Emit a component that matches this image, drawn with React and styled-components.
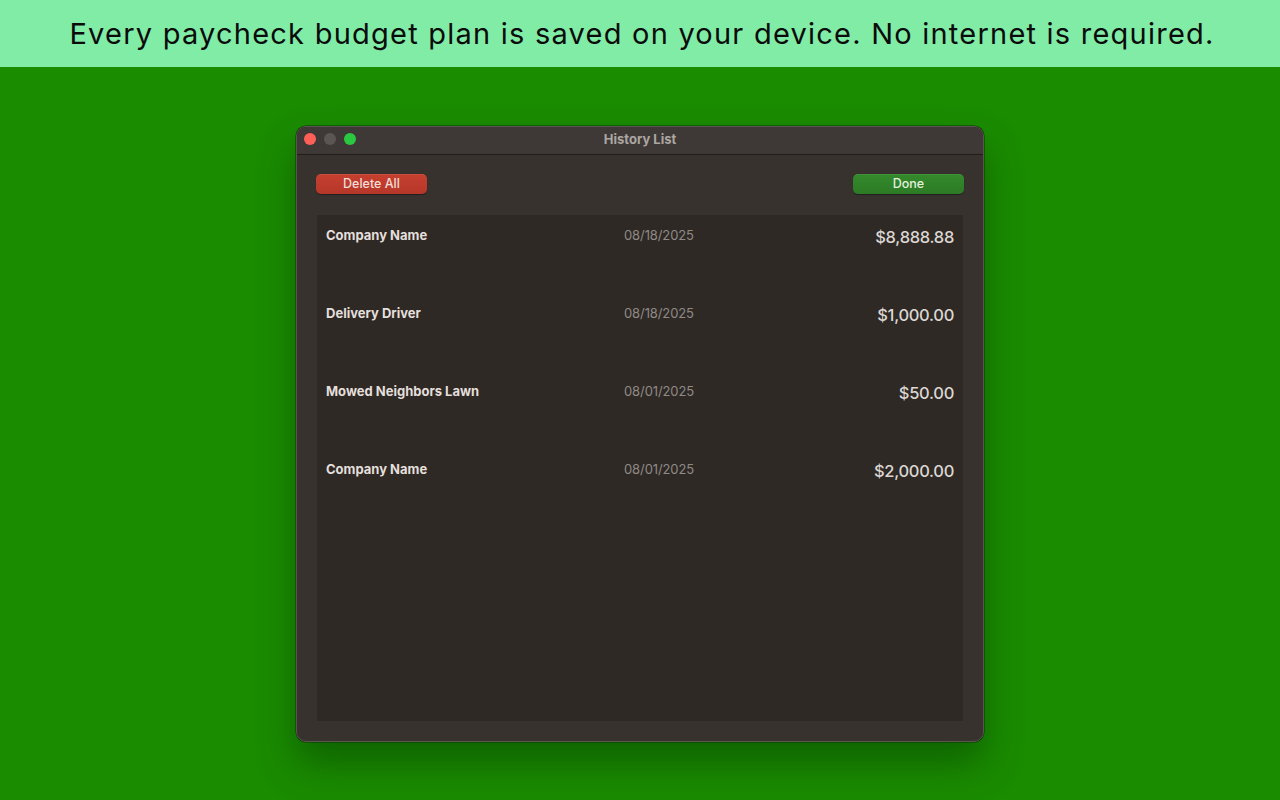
import React from "react";
import styled, { createGlobalStyle } from "styled-components";

const Global = createGlobalStyle`
  html, body { margin: 0; padding: 0; height: 100%; }
  body { font-family: Inter, "Open Sans", sans-serif; -webkit-font-smoothing: antialiased; }
  #root { height: 100%; }
`;

const Page = styled.div`
  width: 1280px;
  height: 800px;
  display: flex;
  flex-direction: column;
  background: #1a8c00;
  overflow: hidden;
`;

const Banner = styled.div`
  height: 67px;
  flex: none;
  background: #80eca6;
  display: flex;
  align-items: center;
  justify-content: center;
  color: #0b0b0b;
  font-size: 29px;
  letter-spacing: 1.23px;
  font-weight: 400;
  padding: 0 0 1px 4px;
  box-sizing: border-box;
`;

const Stage = styled.div`
  flex: 1;
  display: flex;
  align-items: center;
  justify-content: center;
`;

const Window = styled.div`
  width: 688px;
  height: 616px;
  box-sizing: border-box;
  border-radius: 10px;
  border: 1px solid #5b5552;
  background: #38322f;
  display: flex;
  flex-direction: column;
  overflow: hidden;
  box-shadow: 0 22px 38px rgba(0, 50, 0, 0.45), 0 0 0 0.5px rgba(0, 0, 0, 0.6);
`;

const TitleBar = styled.div`
  height: 27px;
  flex: none;
  position: relative;
  display: flex;
  align-items: center;
  justify-content: center;
  background: #3e3936;
  border-bottom: 1px solid #201d1b;
`;

const Lights = styled.div`
  position: absolute;
  left: 7px;
  top: 6.5px;
  display: flex;
  gap: 8px;
`;

const Light = styled.span`
  width: 12px;
  height: 12px;
  border-radius: 50%;
  background: ${(p) => p.$c};
`;

const Title = styled.div`
  font-size: 13px;
  font-weight: 700;
  color: #aca6a2;
  margin-top: -2px;
`;

const Body = styled.div`
  flex: 1;
  display: flex;
  flex-direction: column;
  padding: 19px 19px 20px 19px;
  gap: 21px;
  min-height: 0;
`;

const Toolbar = styled.div`
  display: flex;
  justify-content: space-between;
`;

const Button = styled.button`
  width: 111px;
  height: 20px;
  border: none;
  border-radius: 5px;
  font-family: Inter, sans-serif;
  font-size: 12.5px;
  font-weight: 500;
  padding: 0 0 1px 0;
  color: ${(p) => (p.$danger ? "#f2dcd7" : "#e2f0de")};
  background: ${(p) =>
    p.$danger
      ? "linear-gradient(#c6402f, #b5372a)"
      : "linear-gradient(#348a2b, #2c7a25)"};
  box-shadow: 0 0.5px 1px rgba(0, 0, 0, 0.4), inset 0 0.5px 0 rgba(255, 255, 255, 0.15);
`;

const List = styled.div`
  flex: 1;
  margin: 0 1px;
  background: #2e2925;
  display: flex;
  flex-direction: column;
`;

const Row = styled.div`
  height: 78px;
  box-sizing: border-box;
  padding: 12px 9px 0 9px;
  display: grid;
  grid-template-columns: 298px 1fr auto;
  align-items: start;
`;

const Name = styled.div`
  font-size: 13px;
  font-weight: 700;
  color: #e4dfdb;
  line-height: 16px;
`;

const DateText = styled.div`
  font-size: 13px;
  color: #8f8a86;
  line-height: 16px;
  letter-spacing: -0.1px;
`;

const Amount = styled.div`
  font-size: 16.5px;
  font-weight: 500;
  color: #dcd7d3;
  line-height: 20px;
  letter-spacing: -0.3px;
`;

const rows = [
  { name: "Company Name", date: "08/18/2025", amount: "$8,888.88" },
  { name: "Delivery Driver", date: "08/18/2025", amount: "$1,000.00" },
  { name: "Mowed Neighbors Lawn", date: "08/01/2025", amount: "$50.00" },
  { name: "Company Name", date: "08/01/2025", amount: "$2,000.00" },
];

export default function App() {
  return (
    <Page>
      <Global />
      <Banner>Every paycheck budget plan is saved on your device. No internet is required.</Banner>
      <Stage>
        <Window>
          <TitleBar>
            <Lights>
              <Light $c="#fe5f57" />
              <Light $c="#5a5654" />
              <Light $c="#2ac840" />
            </Lights>
            <Title>History List</Title>
          </TitleBar>
          <Body>
            <Toolbar>
              <Button $danger>Delete All</Button>
              <Button>Done</Button>
            </Toolbar>
            <List>
              {rows.map((r, i) => (
                <Row key={i}>
                  <Name>{r.name}</Name>
                  <DateText>{r.date}</DateText>
                  <Amount>{r.amount}</Amount>
                </Row>
              ))}
            </List>
          </Body>
        </Window>
      </Stage>
    </Page>
  );
}
